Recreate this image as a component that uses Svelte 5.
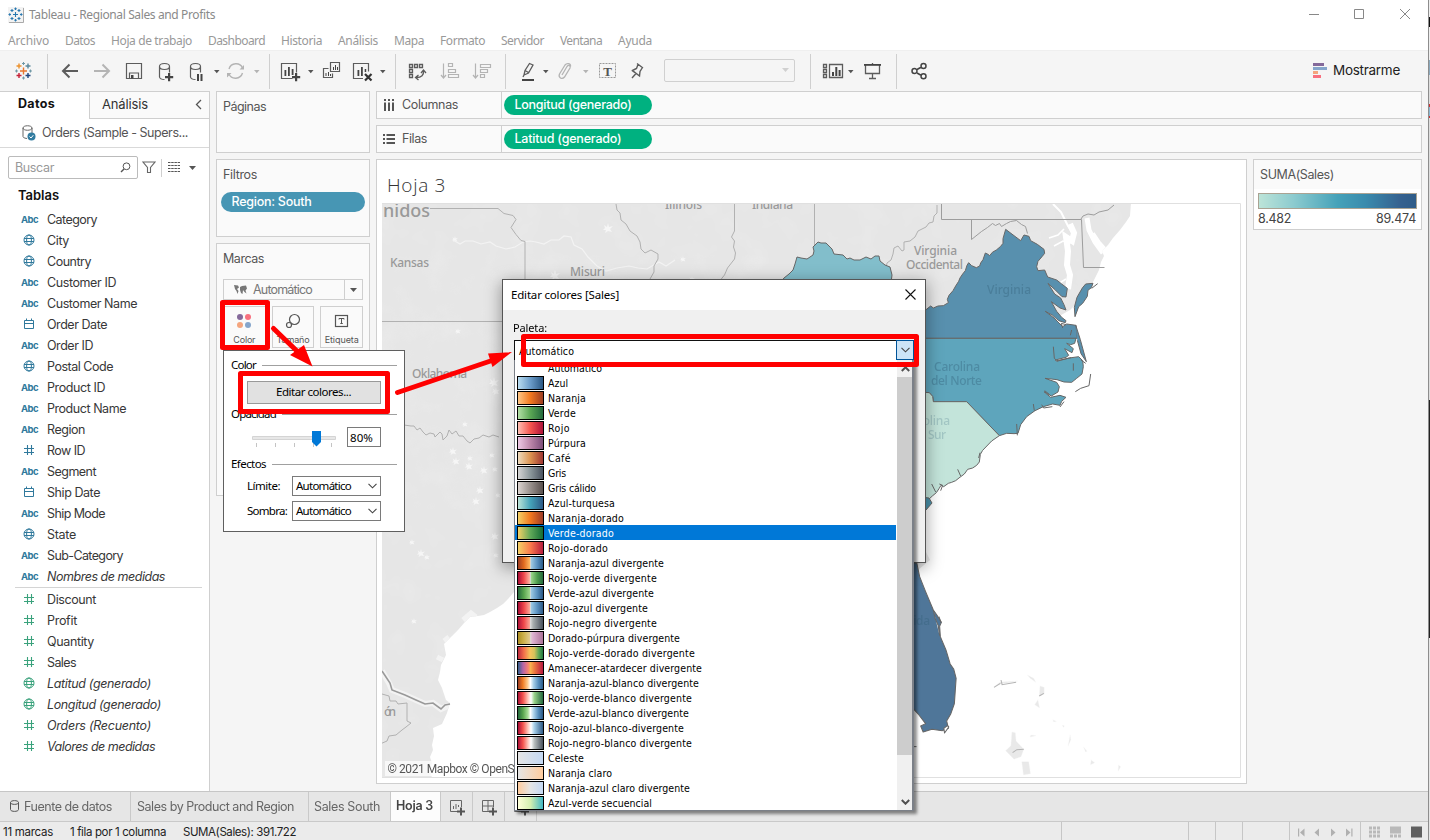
<script>
  // Tracks a label so that it takes up its design width.
  function fit(node, width) {
    if (!width) return;
    const natural = node.getBoundingClientRect().width;
    const count = Math.max(node.textContent.length, 1);
    node.style.letterSpacing = `${((width - natural) / count).toFixed(3)}px`;
  }

  const menus = [
    ['Archivo', 41], ['Datos', 30], ['Hoja de trabajo', 81], ['Dashboard', 57], ['Historia', 41],
    ['Análisis', 40], ['Mapa', 30], ['Formato', 45], ['Servidor', 43], ['Ventana', 42], ['Ayuda', 34]
  ];

  const db = (x) =>
    `M${x} 66.5v10.5q.5 2.5 5 2.5M${x + 10} 66.5v6M${x} 66.5c0-4 10-4 10 0s-10 4-10 0`;

  const tools = [
    { id: 'logo', x: 14, w: 19 }, { sep: 47 },
    { x: 61, w: 18, sw: 2, d: 'M78 71H63M69.5 64.5 63 71l6.5 6.5' },
    { x: 93, w: 18, sw: 2, c: '#b4b4b4', d: 'M94 71h15M102.500 64.500 109 71l-6.500 6.500' },
    { x: 125, w: 18, d: 'M126.500 63.500h15v15h-15zM129.500 78.500v-5.500h9v5.500', f: 'M131 75h2.500v3.500H131z' },
    { x: 158, w: 17, d: db(159.5), f: 'M168 73h2.200v3h3v2.200h-3v3H168v-3h-3V76h3z' },
    { x: 189, w: 15, d: db(190.5), f: 'M197 74h2v7h-2zM200.500 74h2v7h-2z' },
    { caret: 214 },
    { x: 226, w: 20, sw: 1.4, c: '#b4b4b4', d: 'M229 69c2-6.500 11-7 13.500-1M242.500 73c-2 6.500-11 7-13.500 1', f: 'M239.500 69.500h4.500v-4.500zM231.500 73h-4.500v4.500z' },
    { caret: 254, c: '#b4b4b4' }, { sep: 269 },
    { x: 280, w: 21, d: 'M292.500 78.500h-11v-15h15v9', f: 'M284.500 70h1.800v6h-1.800zM288 67h1.800v9H288zM291.700 69h1.800v6h-1.800zM295 73h2.200v3h3v2.200h-3v3H295v-3h-3V76h3z' },
    { caret: 308 },
    { x: 322, w: 20, d: 'M330.500 62.500h9v9h-9zM328.500 68.500h-5v9h9v-4', f: 'M333 67h1v3h-1zM335 65h1v5h-1zM337 67h1v3h-1zM325.500 73h1v3h-1zM328 72h1v4h-1zM330 74h1v2h-1z' },
    { x: 352, w: 22, d: 'M363 78.500h-9.500v-15h15v8', f: 'M357.500 70h1.800v6h-1.800zM361 67h1.800v9H361zM364.700 69h1.500v3h-1.500z', d2: 'M365 74l6.500 6.500M371.500 74l-6.500 6.500' },
    { caret: 380 }, { sep: 395 },
    { x: 408, w: 20, sw: 1.3, d: 'M409.500 64.500h3v3h-3zM414.500 64.500h3v3h-3zM419.500 64.500h3v3h-3zM409.500 69.500h3v3h-3zM409.500 74.500h3v3h-3zM423.500 71c.5 4-2 6.500-7 6.500M421 73l2.500-3 2.500 3M418.500 75l-3 2.500 3 2.500' },
    { x: 440, w: 20, sw: 1.2, c: '#b4b4b4', d: 'M443.500 63.500v14M441 75l2.500 3 2.500-3M448.500 63.500h4v3h-4zM448.500 69.500h7v3h-7zM448.500 74.500h10v3h-10z' },
    { x: 472, w: 20, sw: 1.2, c: '#b4b4b4', d: 'M475.500 63.500v14M473 75l2.500 3 2.500-3M480.500 64.500h10v3h-10zM480.500 69.500h7v3h-7zM480.500 74.500h4v3h-4z' },
    { sep: 505 },
    { x: 521, w: 15, sw: 1.3, d: 'M524 75l1-4.500 4.500-7 3.500 1.500-4.500 8zM525 70.500l3.500 2M524 75l-1 2', f: 'M522 79h12v2h-12z' },
    { caret: 543 },
    { x: 557, w: 16, sw: 1.3, c: '#b4b4b4', d: 'M562 75l5-8.500c1.500-2 4-1 3 1.500l-5.500 9c-2.500 3-6.500.5-5-3l5.500-9c2-2.500 6-1.500 5.500 1.500' },
    { caret: 583, c: '#b4b4b4' },
    { id: 'text', x: 598, w: 19 },
    { x: 630, w: 16, sw: 1.4, d: 'M637 63.500l6 4.500M638 64.500l-1.500 4-4 2 7 5.500.500-4.500 2.500-4M636 73.500l-4 4.500M632 70.500l7.500 5.500' },
    { select: 664 }, { sep: 810 },
    { x: 822, w: 22, sw: 1.3, d: 'M823.500 64.500h3v3h-3zM823.500 69.500h3v3h-3zM823.500 74.500h3v3h-3zM829.500 64.500h13v13h-13z', f: 'M832 72h2v4h-2zM835.300 67h2v9h-2zM838.600 70h2v6h-2z' },
    { caret: 848 },
    { x: 863, w: 19, sw: 1.3, d: 'M865.500 65v8.500h14V65M872.500 63v1M872.500 73.500v4.500M869 78.500h7', f: 'M864 64h17v1.800h-17z' },
    { sep: 896 },
    { x: 911, w: 17, sw: 1.5, c: '#444', d: 'M917 69.500l4.500-2.500M917 73l4.500 2.500M912 71a2.500 2.500 0 1 0 5 0a2.500 2.500 0 1 0-5 0M921 66a2.500 2.500 0 1 0 5 0a2.500 2.500 0 1 0-5 0M921 76.200a2.500 2.500 0 1 0 5 0a2.500 2.500 0 1 0-5 0' },
    { id: 'show', x: 1312, w: 17 }
  ];
  let end = 0;
  for (const t of tools) {
    t.left = t.x ?? t.sep ?? t.caret ?? t.select;
    t.size = t.w ?? (t.sep ? 1 : t.caret ? 6 : 131);
    t.gap = t.left - end;
    end = t.left + t.size;
  }

  const dims = [
    ['abc', 'Category', 50], ['globe', 'City', 22], ['globe', 'Country', 44], ['abc', 'Customer ID', 69],
    ['abc', 'Customer Name', 90], ['date', 'Order Date', 60], ['abc', 'Order ID', 46], ['globe', 'Postal Code', 66],
    ['abc', 'Product ID', 58], ['abc', 'Product Name', 79], ['abc', 'Region', 38], ['num', 'Row ID', 38],
    ['abc', 'Segment', 49], ['date', 'Ship Date', 53], ['abc', 'Ship Mode', 58], ['globe', 'State', 29],
    ['abc', 'Sub-Category', 76], ['abc', 'Nombres de medidas', 118, true]
  ];
  const measures = [
    ['num', 'Discount', 49], ['num', 'Profit', 30], ['num', 'Quantity', 47], ['num', 'Sales', 29],
    ['globe', 'Latitud (generado)', 104, true], ['globe', 'Longitud (generado)', 114, true],
    ['num', 'Orders (Recuento)', 104, true], ['num', 'Valores de medidas', 108, true]
  ];

  const blue = '#b9ddf1,#6a9bc8,#2a5783';
  const green = '#b3e0a6,#5aa654,#24693d';
  const palettes = [
    ['Automático', 54, ''], ['Azul', 20, blue], ['Naranja', 38, '#ffc685,#f2781f,#9e3d22'], ['Verde', 28, green],
    ['Rojo', 22, '#ffbeb2,#f5554e,#ae123a'], ['Púrpura', 38, '#eec9e5,#bc86a9,#7c4d79'],
    ['Café', 23, '#eedbbd,#dc9350,#9f3632'], ['Gris', 18, '#d5d5d5,#8b979b,#49525e'],
    ['Gris cálido', 48, '#dcd4d0,#98908c,#59504e'], ['Azul-turquesa', 67, '#bce4d8,#45a2b9,#2c5985'],
    ['Naranja-dorado', 76, '#f4d166,#f2781f,#9e3a26'], ['Verde-dorado', 66, '#f4d166,#60a858,#146c36'],
    ['Rojo-dorado', 60, '#f4d166,#fb7a4c,#b71d3e'],
    ['Naranja-azul divergente', 116, '#9e3d22,#e0691f,#ffb55f 46%,#d9d5c9 50%,#9cc8e2 54%,#5b92c0,#2b5c8a'],
    ['Rojo-verde divergente', 109, '#a90c38,#f0474a,#fdb1a0 46%,#d0d7cc 50%,#98d388 54%,#4f9d4f,#24693d'],
    ['Verde-azul divergente', 106, '#24693d,#59a54e,#9fd88d 47%,#cbd8d8 50%,#99c6e2 54%,#5b92c0,#2a5783'],
    ['Rojo-azul divergente', 100, '#a90c38,#f0474a,#fba798 47%,#d7d7d7 50%,#99c6e2 54%,#5b92c0,#2e5a87'],
    ['Rojo-negro divergente', 109, '#ae123a,#f0474a,#fba798 47%,#d9d9d9 50%,#a9b0b1 60%,#49525e'],
    ['Dorado-púrpura divergente', 132, '#ad9024,#cdb14c,#dfc98c 46%,#ddd5cf 50%,#ddb4d1 58%,#ac7299'],
    ['Rojo-verde-dorado divergente', 147, '#be2a3e,#f3704b,#f6c45c 48%,#d5c25b,#60a858,#22763f'],
    ['Amanecer-atardecer divergente', 154, '#33608c,#b464a8,#f58073 40%,#f7b24e 50%,#ed7c40 65%,#b81840'],
    ['Naranja-azul-blanco divergente', 151, '#9e3d22,#ef7b24,#ffca8c 38%,#fff 50%,#a8cfe8 62%,#5b92c0,#2b5c8a'],
    ['Rojo-verde-blanco divergente', 144, '#ae123a,#f5554e,#ffc6bb 40%,#fff 52%,#9bd38b 65%,#24693d'],
    ['Verde-azul-blanco divergente', 141, '#24693d,#59a54e,#aadf9a 40%,#fff 50%,#b2d6ed 62%,#5b92c0,#2a5783'],
    ['Rojo-azul-blanco-divergente', 136, '#a90c38,#f5554e,#ffc6bb 40%,#fff 52%,#a8cfe8 65%,#2e5a87'],
    ['Rojo-negro-blanco divergente', 144, '#ae123a,#f5554e,#ffc6bb 40%,#fff 52%,#bbc0c0 65%,#49525e'],
    ['Celeste', 36, '#e5e5e5,#c4d8f3'], ['Naranja claro', 64, '#e5e5e5,#ffcc9e'],
    ['Naranja-azul claro divergente', 142, '#ffcc9e,#e5e5e5,#c4d8f3'],
    ['Azul-verde secuencial', 104, '#feffd9,#d3efb0,#41b7c4']
  ];

  // Small reservoirs scattered over the plain, each one with a size.
  const lakes = [
    [455, 239, 3], [608, 228, 5], [683, 259, 3], [692, 279, 3], [555, 275, 5], [458, 331, 3], [494, 382, 5],
    [496, 391, 4], [465, 424, 3], [453, 451, 4], [456, 461, 4], [469, 466, 4], [470, 458, 3], [484, 470, 4],
    [495, 469, 3], [480, 490, 4], [476, 501, 4], [498, 495, 3], [492, 455, 3], [412, 542, 3], [421, 553, 4],
    [427, 557, 3], [495, 536, 4], [496, 555, 3], [414, 621, 3]
  ];
</script>

{#snippet label(text, width)}
  <span class="label" use:fit={width}>{text}</span>
{/snippet}

{#snippet glyph(kind)}
  <span class="glyph">
    {#if kind === 'abc'}
      <span class="abc" use:fit={17}>Abc</span>
    {:else if kind === 'globe'}
      <svg width="12" height="12" viewBox="0 0 12 12"><g fill="none" stroke="currentColor"><circle cx="6" cy="6" r="5" /><ellipse cx="6" cy="6" rx="2.400" ry="5" /><path d="M1 4.500h10M1 7.500h10" /></g></svg>
    {:else if kind === 'date'}
      <svg width="12" height="12" viewBox="0 0 12 12"><path d="M1.500 2.500h9v8h-9zM1.500 5.500h9M3.500.5v2.500M8.500.5v2.500" fill="none" stroke="currentColor" /></svg>
    {:else}
      <svg width="12" height="12" viewBox="0 0 12 12"><path d="M4.500 1v10M8.500 1v10M1 4.500h10M1 8.500h10" fill="none" stroke="currentColor" stroke-width="1.100" /></svg>
    {/if}
  </span>
{/snippet}

{#snippet chevron()}
  <svg class="chev" width="9" height="6" viewBox="0 0 9 6"><path d="M.5.8 4.500 4.800 8.500.8" fill="none" stroke="#444" stroke-width="1.100" /></svg>
{/snippet}

<div class="window">
  <header class="title">
    <svg width="16" height="16" viewBox="0 0 16 16">
      <path d="M1 15.500h14.500V1" fill="none" stroke="#aaa" />
      <path d="M7.500 5v5M5 7.500h5M4 2v3M2.500 3.500h3M11 2v3M9.500 3.500h3M4 10v3M2.500 11.500h3M11 10v3M9.500 11.500h3M7.500 .5v2.500M6.300 1.700h2.500M7.500 12v2.500M6.300 13.300h2.500M1.700 6.300v2.500M.5 7.500H3M13.300 6.300v2.500M12 7.500h2.500" fill="none" stroke="#2878b0" stroke-width="1.100" />
    </svg>
    <div class="name">{@render label('Tableau - Regional Sales and Profits', 186)}</div>
    <svg class="controls" width="104" height="14" viewBox="0 0 104 14"><path d="M1 6.500h10M46.500 1.500h9v9h-9zM92 1l10 10M102 1 92 11" fill="none" stroke="#888" /></svg>
  </header>

  <nav class="menu">
    {#each menus as [text, width]}{@render label(text, width)}{/each}
  </nav>

  <div class="toolbar">
    {#each tools as t}
      {#if t.sep}
        <i class="sep" style:margin-left="{t.gap}px"></i>
      {:else if t.caret}
        <svg style:margin-left="{t.gap}px" width="6" height="26" viewBox="0 0 6 26"><path d="M0 12h5.500L2.800 15.200z" fill={t.c ?? '#555'} /></svg>
      {:else if t.select}
        <div class="fitbox" style:margin-left="{t.gap}px"><svg width="8" height="5" viewBox="0 0 8 5"><path d="M0 0h7L3.500 4z" fill="#d0d0d0" /></svg></div>
      {:else}
        <svg style:margin-left="{t.gap}px" width={t.w} height="26" viewBox="{t.x} 58 {t.w} 26">
          {#if t.id === 'logo'}
            <g fill="none" stroke-width="1.400">
              <path d="M23.500 67.500v7M20 71h7" stroke="#e8762d" />
              <path d="M19 63.500v5M16.500 66h5" stroke="#eb912c" /><path d="M28 63.500v5M25.500 66h5" stroke="#59879b" />
              <path d="M19 73v5M16.500 75.500h5" stroke="#c72037" /><path d="M28 73v5M25.500 75.500h5" stroke="#1f457e" />
              <path d="M23.500 62v3M22 63.500h3M23.500 76.500v3M22 78h3M16.500 69.500v3M15 71h3M30.500 69.500v3M29 71h3" stroke="#7199a6" stroke-width="1" />
            </g>
          {:else if t.id === 'text'}
            <rect x="599.500" y="63.500" width="16" height="14" fill="none" stroke="#999" stroke-dasharray="2 1" />
            <text x="607.500" y="75.500" text-anchor="middle" font-family="Liberation Serif, serif" font-size="13" font-weight="bold" fill="#555">T</text>
          {:else if t.id === 'show'}
            <path d="M1313 63h11v3h-11z" fill="#84699a" /><path d="M1313 67h14v3h-14z" fill="#85a5cb" /><path d="M1313 71h5v3h-5z" fill="#f4a57e" /><path d="M1313 75h8v3h-8z" fill="#f8707f" />
          {:else}
            <path d={t.d} fill="none" stroke={t.c ?? '#5c5c5c'} stroke-width={t.sw ?? 1.2} />
            {#if t.f}<path d={t.f} fill={t.c ?? '#444'} />{/if}
            {#if t.d2}<path d={t.d2} fill="none" stroke="#333" stroke-width="2.200" />{/if}
          {/if}
        </svg>
      {/if}
    {/each}
    <div class="showme">{@render label('Mostrarme', 67)}</div>
  </div>

  <main class="body">
    <aside class="data">
      <div class="tabs">
        <div class="on">{@render label('Datos', 37)}</div>
        <div class="off">{@render label('Análisis', 46)}
          <svg width="7" height="11" viewBox="0 0 7 11"><path d="M6 1 1.500 5.500 6 10" fill="none" stroke="#555" stroke-width="1.300" /></svg>
        </div>
      </div>
      <div class="source">
        <svg width="14" height="16" viewBox="0 0 14 16"><path d="M1 3v8.500Q1.500 13.500 5 13.500M10 3v5M1 3c0-3 9-3 9 0s-9 3-9 0" fill="none" stroke="#666" /><circle cx="9.500" cy="11.500" r="4" fill="#327ca0" /><path d="M7.500 11.500 9 13l2.300-2.800" fill="none" stroke="#fff" /></svg>
        {@render label('Orders (Sample - Supers...', 146)}
      </div>
      <div class="search">
        <div class="box">{@render label('Buscar', 39)}
          <svg width="11" height="11" viewBox="0 0 11 11"><circle cx="6.500" cy="4.300" r="3.400" fill="none" stroke="#555" /><path d="M4 7 1 10" stroke="#555" stroke-width="1.400" /></svg>
        </div>
        <svg width="14" height="13" viewBox="0 0 14 13"><path d="M1 1h12L8.500 6.500v5h-3v-5z" fill="none" stroke="#666" stroke-width="1.100" /></svg>
        <i></i>
        <svg width="12" height="11" viewBox="0 0 12 11"><path d="M0 .5h12M0 3.500h12M0 6.500h12M0 9.500h12" stroke="#555" stroke-width="1.200" stroke-dasharray="2.500 .7" /></svg>
        <svg class="drop" width="7" height="4" viewBox="0 0 7 4"><path d="M0 0h7L3.500 4z" fill="#555" /></svg>
      </div>
      <h2>{@render label('Tablas', 41)}</h2>
      <ul class="dims">
        {#each dims as [kind, name, width, it]}<li class:it>{@render glyph(kind)}{@render label(name, width)}</li>{/each}
      </ul>
      <ul class="measures">
        {#each measures as [kind, name, width, it]}<li class:it>{@render glyph(kind)}{@render label(name, width)}</li>{/each}
      </ul>
    </aside>

    <section class="cards">
      <div class="card pages">{@render label('Páginas', 43)}</div>
      <div class="card filters">{@render label('Filtros', 34)}<div class="pill region">{@render label('Region: South', 80)}</div></div>
      <div class="card marks">
        {@render label('Marcas', 41)}
        <div class="marktype">
          <svg width="13" height="10" viewBox="0 0 13 10"><path d="M0 0l4 .5 1 2-2 1.500 1.500 2L3.500 9l-1-3L1 4zM6 2l2-1 4-.5 1 3-1.500 2 1 3-2-1.500L9 5 8.500 9 7 8 6 5z" fill="#777" /></svg>
          {@render label('Automático', 59)}
          <b><svg width="7" height="4" viewBox="0 0 7 4"><path d="M0 0h7L3.500 4z" fill="#555" /></svg></b>
        </div>
        <div class="buttons">
          <div><svg width="16" height="16" viewBox="0 0 16 16"><circle cx="4" cy="4" r="3" fill="#84699a" /><circle cx="12" cy="4" r="3" fill="#f8707f" /><circle cx="4" cy="12" r="3" fill="#f4a57e" /><circle cx="12" cy="12" r="3" fill="#85a5cb" /></svg>{@render label('Color', 22)}</div>
          <div><svg width="16" height="16" viewBox="0 0 16 16"><circle cx="9.500" cy="6.500" r="5" fill="none" stroke="#555" stroke-width="1.200" /><circle cx="4" cy="12" r="2.500" fill="#fafafa" stroke="#555" stroke-width="1.200" /></svg>{@render label('Tamaño', 33)}</div>
          <div><svg width="16" height="16" viewBox="0 0 16 16"><rect x="1.500" y="2.500" width="12" height="11" fill="none" stroke="#555" stroke-width="1.200" /><path d="M5 6.500v-1h5v1M7.500 5.500v5M6.300 10.500h2.500" fill="none" stroke="#555" /></svg>{@render label('Etiqueta', 34)}</div>
        </div>
      </div>
    </section>

    <section class="work">
      <div class="shelf">
        <div class="key"><svg width="12" height="12" viewBox="0 0 12 12"><path d="M2 0v2M6 0v2M10 0v2M2 3.500V12M6 3.500V12M10 3.500V12" stroke="#555" stroke-width="2" /></svg>{@render label('Columnas', 56)}</div>
        <div class="pill geo">{@render label('Longitud (generado)', 117)}</div>
      </div>
      <div class="shelf">
        <div class="key"><svg width="12" height="12" viewBox="0 0 12 12"><path d="M0 2h2M0 6h2M0 10h2M3.500 2H12M3.500 6H12M3.500 10H12" stroke="#555" stroke-width="1.800" /></svg>{@render label('Filas', 25)}</div>
        <div class="pill geo">{@render label('Latitud (generado)', 107)}</div>
      </div>
      <div class="canvas">
        <div class="sheet">
          <h1>{@render label('Hoja 3', 59)}</h1>
          <svg class="map" width="859" height="575" viewBox="382 203 859 575">
            <defs>
              <filter id="relief" x="0" y="0" width="100%" height="100%"><feTurbulence type="fractalNoise" baseFrequency=".035" numOctaves="3" seed="6" /><feColorMatrix values="0 0 0 0 1  0 0 0 0 1  0 0 0 0 1  0 0 0 1.600 -.7" /></filter>
              <clipPath id="land"><path d="M382 203H1131L1130 216 1126 222 1120 230 1113 238 1108 245 1102 251 1104 256 1101 262 1099 270 1092 284 1084 296 1070 310 1000 350 900 500 930 560 918 570H515L514 592 508 599 503 604 497 608 490 612 484 615 478 616 470 617 465 622 458 630 452 636 444 644 446 655 441 665 440 672 438 680 442 688 444 694 446 700 450 703 447 713 442 724 433 728 434 736 432 745 433 750 430 757 432 763 430 770 432 778H382z" /></clipPath>
            </defs>
            <g clip-path="url(#land)">
              <rect x="382" y="203" width="749" height="575" fill="#e6e6e6" />
              <rect x="382" y="203" width="749" height="575" filter="url(#relief)" opacity=".18" />
              {#each lakes as [x, y, s]}
                <path transform="translate({x} {y}) scale({s / 5})" d="M-4-3l3 2 1-4 1 4 4-1-3 3 2 3-4-1-3 2 1-3-3 0 2-2z" fill="#f6f6f6" />
              {/each}
              <g fill="none" stroke="#f3f3f3" stroke-width="1.200">
                <path d="M453 240l7 4 5-3 8 0 8 3 9-2 6 4 10 3 9-2 8-5 7-1 6 1 8 2 7-4 8 0 5-4 7 1 3 8 8 4 6 8 9 9 9 5 11-3 12-2 9 2 9 1 12-7 7 4 9-6" />
                <path d="M1053 204l8 8 3 6 4 8 5 8" stroke="#fff" stroke-width="2" />
                <path d="M1070 224l4 9-2 8-6-4 2 14-1 14 3 10-2 14" stroke="#fff" stroke-width="6" />
                <path d="M1087 218l2 12 6 12 8 11" stroke="#fff" stroke-width="5" />
                <path d="M1092 234l6 9 8 9" stroke="#fff" stroke-width="6" />
                <path d="M1054 246l9-5 8 2M1058 284l8-5M1049 238l9-3 6-6" stroke="#fff" stroke-width="1.600" />
                <path d="M450 705l-9 4-8-6-8 1-9-4-11-5-13-5-3-7-7-12" stroke-width="6" />
                <path d="M463 620l8-7 5 4M449 637l-5 4M437 657l6 3" stroke-width="5" />
              </g>
            </g>
            <g fill="none" stroke="#b1b1b1" stroke-width="1">
              <path d="M430 208.500h68l6 5 9 2 3 4-5 8 5 7 5 6 4 1V320M382 321.500h122" />
              <path d="M616 204l1 6 3 3 1 7 5 4 4 7 7 5 3 6 1 7 4 4 6-3 7 4 0 5-4 7 0 6-4 7 2 6M734.500 204v27l-3 6 3 4-1 6 2 6-1 6-7 9-3 7-4 5 2 4M814.500 204v41M881 268l5 0 1-5 4-3 2-6 1-6 4-2 4 5 2-1 0-8 6-1 5-4 3-6 8-4 3-4 4-1 1-6 3-3 0-8" />
              <path d="M941.500 204v15.500h140l2 48h21M971.500 219.500v20l10-8 6-4 5-4 3 2 4-2 2 3 5-3 4-2 6-1 5 4 4 2 2 7M1081 219l2-3 5-2 6 1 5-3 9-2 6-5" stroke="#9d9d9d" />
              <path d="M404 425l7 1 3 0 3 4 3-2 3 4 3 3 4-2 4 1 1 3 5-5 2 2 1 6 4-4 2-6 3 4 4-3 3 5 4 0 4 5 3 2 4-4 5-1 4-3 6 2 4-2 6 2" />
              <path d="M382 671l8 12 2 7 13 5 11 5 9 4 8-1 8 6 4-4 5-1" stroke="#999" stroke-width="1.600" />
              <path d="M382 694l7 2 1 5 6 0 2 3 9-1 0 18 4 2-5 4-4 3-6 5-7 1-2 5-7 3" />
            </g>
            <g stroke="#666" stroke-width="1" stroke-linejoin="round">
              <path d="M779 284l5-6 5-4 4-4 2-6 2-7 4 1 6 1 6-4 1-4-1-4 3-3 2-2 3 1 5 0 6 6 2 5 9 1 4 4 3-1 4 2 6 0 6-3 5 2 4-3 4 0 1 5 5 4 5 2 2 8-1 8-3 5z" fill="#82becb" />
              <g transform="translate(880 200) scale(.33333)" stroke-width="3">
                <path d="M110 415V345l27-15 15-12 8 6 14-6 16-1 15-9-3-10 5-12 12-14 8-14 9-14 4-10 8-12 8-10 5-16 5-8 9 9 14 6 10-5 3-9 7-10 7-20 8 4 5 4 8-10 12-7 12-10 8-10 0-14L377 88 422 122 432 105 447 109 452 122 472 133 492 148 494 160 486 170 474 184 470 200 474 212 494 210 503 231 530 240 545 252 562 265 558 291 546 290 526 270 504 250 524 282 542 294 552 314 558 330 540 324 514 305 530 334 545 352 558 362 556 368 536 362 518 346 496 334 522 354 534 366 548 380 560 372 588 376 592 415z" fill="#5890ae" />
                <path d="M110 415H588L584 430 572 434 560 430 580 446 576 458 554 446 566 466 558 472 526 480 530 484 568 474 596 470 608 482 610 500 606 522 590 535 575 547 552 546 531 539 495 535 530 547 538 560 534 576 514 588 492 575 512 592 540 586 558 592 545 604 540 616 518 612 490 620 465 632 440 650 422 674 414 700 402 701 380 700 358 707 260 606H160l-2-16-10-11-38-3z" fill="#5ea5bc" />
                <path d="M110 575l38 3 10 11 2 16H260l98 102-23 16-27 28-7 12-3 23-8 10-12 8-15 4-10 14-16 12-10 8-12 5-10 3-14 10-8-4-6 10-8 12-12 10-16 15-40 10z" fill="#c3e4da" />
                <path d="M585 350l-2-28 8-30 16-28 10-12 22-2-5 13-10 8-2 18-14 21-12 10zM635 265l18-14M587 375l14 44 18 66-16-24-11-40" fill="#5890ae" />
                <path d="M632 522l-5 35-25 8-16 10M520 440l3 35 8 7 42-9M552 605l-12 16M412 706l-2-34" fill="none" />
                <path d="M548 384l-4-14 14 4M575 390l-4 16M494 572l15 12M485 614l6 10 26-4M460 612l3 20M580 512l0-22M155 852l12 24M178 852l10 4-6 16M233 808l9 20M300 758l-4 16M603 480l14 10" fill="none" />
              </g>
              <path d="M921 497l8 1 3 5-6 7-5 2z" fill="#4a92ab" />
              <g transform="translate(880 480) scale(.3508 .3333)" stroke-width="3">
                <path d="M80 247l25 3 8 40 17 45 22 55 10 15 13 22-5 12 2 31 16 40 12 42 10 15 7 28-5 76-10 30-12 22 5 22-17 7-30-4-25 8-7-18 14-7-19-26-16-19-20-20z" fill="#4f7699" />
                <path d="M152 390l5 25 9 22 4 30M168 410l6 18M182 745l10-8 4 4-12 18z" fill="#fff" />
                <path d="M97 800l7 0" />
              </g>
            </g>
            <g transform="translate(880 480) scale(.3508 .3333)" fill="#e9e9e9" stroke="#f6f6f6">
              <path d="M325 620l18-14 50-3-48 9zM420 585l18 10 6 12-16-12zM456 618l12 4 0 20-14 6zM450 660l5 24-14-10zM376 756l10 2 2 25 22 25-8 22-20 8-24-26 15-15zM404 845l20 0 5 36-20 4zM430 765l15 2-17 4zM542 765l2 14-8 20zM580 800l10 14-4 2zM602 840l10 8-12 6zM680 855l6 5-7 14zM493 720l10 4-8 2zM520 735l6 3-4 4z" />
              <path d="M325 622l18-12M345 600l3 14 40-7M454 648l13-8M378 818l12-9 20-1" fill="none" stroke="#b4b4b4" stroke-width="3" />
            </g>
            <g class="places" fill="#999">
              <text x="383" y="217" font-size="18" textLength="47">nidos</text>
              <text x="390" y="267" textLength="39">Kansas</text>
              <text x="570" y="276" textLength="35">Misuri</text>
              <text x="412" y="378" textLength="55">Oklahoma</text>
              <text x="665" y="209" textLength="37">Illinois</text>
              <text x="752" y="209" textLength="41">Indiana</text>
              <text x="914" y="255" textLength="43">Virginia</text>
              <text x="906" y="269" textLength="57">Occidental</text>
              <text x="384" y="716" textLength="12">ón</text>
              <g fill="#34617a" opacity=".38">
                <text x="987" y="294" textLength="44">Virginia</text>
                <text x="934" y="371" textLength="46">Carolina</text>
                <text x="931" y="385" textLength="51">del Norte</text>
                <text x="904" y="425" textLength="46" opacity=".6">Carolina</text>
                <text x="928" y="439" textLength="18" opacity=".6">Sur</text>
                <text x="893" y="625" textLength="37">Florida</text>
              </g>
            </g>
            <rect x="385" y="761" width="134" height="15" fill="#fff" opacity=".7" />
            <text class="credit" x="387.500" y="773" textLength="172">© 2021 Mapbox © OpenStreetMap</text>
            <path d="M382 203.500H1240.500V777.500H382" fill="none" stroke="#e0e0e0" />
          </svg>
        </div>
        <div class="legend">
          <div class="head">{@render label('SUMA(Sales)', 74)}</div>
          <div class="ramp"></div>
          <div class="ends">{@render label('8.482', 33)}{@render label('89.474', 40)}</div>
        </div>
      </div>
    </section>
  </main>

  <footer class="sheets">
    <div class="src"><svg width="9" height="12" viewBox="0 0 9 12"><path d="M.5 2.500v7c0 2.500 8 2.500 8 0v-7c0-2.500-8-2.500-8 0s8 2.500 8 0" fill="none" stroke="#555" /></svg>{@render label('Fuente de datos', 88)}</div>
    <div class="long">{@render label('Sales by Product and Region', 157)}</div>
    <div class="south">{@render label('Sales South', 66)}</div>
    <div class="active">{@render label('Hoja 3', 37)}</div>
    <div class="new"><svg width="16" height="16" viewBox="0 0 16 16"><path d="M8 11.500H.5V.5h11V7M3.500 6v3M6 4v5M8.500 5v2" fill="none" stroke="#666" /><path d="M11 7.500v8M7 11.500h8" stroke="#555" stroke-width="2" /></svg></div>
    <div class="new"><svg width="16" height="16" viewBox="0 0 16 16"><path d="M8 11.500H.5V.5h11V7M6 .5v11M.5 6h11" fill="none" stroke="#666" /><path d="M11 7.500v8M7 11.500h8" stroke="#555" stroke-width="2" /></svg></div>
    <div class="new"><svg width="16" height="16" viewBox="0 0 16 16"><path d="M8 11.500H.5V2.500h11V7" fill="none" stroke="#666" /><path d="M11 7.500v8M7 11.500h8" stroke="#555" stroke-width="2" /></svg></div>
  </footer>

  <footer class="status">
    {@render label('11 marcas', 50)}{@render label('1 fila por 1 columna', 96)}{@render label('SUMA(Sales): 391.722', 113)}
    <div class="cells">
      <i class="c1"></i><i class="c2"></i><i class="c2"></i><i class="c3"></i>
      <div class="step"><svg width="55" height="9" viewBox="0 0 55 9" fill="#b0b0b0"><path d="M0 .5h1.200v8H0zM6.500.5v8L2 4.500zM21 .5v8L16.500 4.500zM33 .5v8l4.500-4zM48 .5v8l4.500-4zM53.300.5h1.200v8h-1.200z" /></svg></div>
      <div class="views"><svg width="54" height="12" viewBox="0 0 54 12"><path d="M0 .5h3v3H0zM4 .5h3v3H4zM8 .5h3v3H8zM0 4.500h3v3H0zM4 4.500h3v3H4zM8 4.500h3v3H8zM0 8.500h3v3H0zM4 8.500h3v3H4zM8 8.500h3v3H8zM21 .5h11v7H21zM21 8.500h3v3h-3zM25 8.500h3v3h-3zM29 8.500h3v3h-3z" fill="#b9b9b9" /><path d="M42 .5h11v11h-11z" fill="#606060" /></svg></div>
    </div>
  </footer>

  <div class="popup">
    <div class="rule">{@render label('Color', 25)}<i></i></div>
    <div class="edit">{@render label('Editar colores...', 75)}</div>
    <div class="rule second">{@render label('Opacidad', 45)}<i></i></div>
    <div class="opacity">
      <svg width="84" height="20" viewBox="252 429 84 20"><path d="M252.500 436.500h83v3h-83z" fill="#e7e7e7" stroke="#d4d4d4" /><path d="M256.500 443v4M275.500 443v4M294.500 443v4M313.500 443v4M331.500 443v4" stroke="#c4c4c4" /><path d="M312 431h9v11l-4.500 4.500L312 442z" fill="#0078d7" /></svg>
      <div>{@render label('80%', 23)}</div>
    </div>
    <div class="rule third">{@render label('Efectos', 35)}<i></i></div>
    <div class="choice">{@render label('Límite:', 33)}<div>{@render label('Automático', 55)}{@render chevron()}</div></div>
    <div class="choice">{@render label('Sombra:', 40)}<div>{@render label('Automático', 55)}{@render chevron()}</div></div>
  </div>

  <div class="dialog">
    <div class="bar">{@render label('Editar colores [Sales]', 108)}
      <svg width="11" height="11" viewBox="0 0 11 11"><path d="M.5.5l10 10M10.500.5l-10 10" stroke="#111" stroke-width="1.100" /></svg>
    </div>
    <div class="field">{@render label('Paleta:', 34)}</div>
  </div>

  <div class="picker">
    <div class="value">{@render label('Automático', 55)}<b>{@render chevron()}</b></div>
    <div class="list">
      <ul>
        {#each palettes as [name, width, stops]}
          <li class:sel={name === 'Verde-dorado'}>
            <i class:none={!stops} style:background-image={stops ? `linear-gradient(90deg,${stops})` : 'none'}></i>{@render label(name, width)}
          </li>
        {/each}
      </ul>
      <div class="scroll">
        <svg width="9" height="6" viewBox="0 0 9 6"><path d="M.8 5 4.500 1.300 8.200 5" fill="none" stroke="#505050" stroke-width="2" /></svg>
        <i></i>
        <svg width="9" height="6" viewBox="0 0 9 6"><path d="M.8 1 4.500 4.700 8.200 1" fill="none" stroke="#505050" stroke-width="2" /></svg>
      </div>
    </div>
  </div>

  <svg class="marksup" width="1430" height="840" viewBox="0 0 1430 840">
    <g fill="none" stroke="#f00" stroke-width="5" stroke-linejoin="round">
      <rect x="222.500" y="302.500" width="45" height="45" /><rect x="240.500" y="373.500" width="147" height="38" /><rect x="523.500" y="336.500" width="393" height="28" />
      <path d="M273.500 328.500 300 354M397.500 392.500 492 360.500" stroke-linecap="round" />
    </g>
    <path d="M312.500 366.500 304 345l-14 10zM512 352l-24 1.500 4.500 13.500z" fill="#f00" />
  </svg>
  <div class="edge"></div>
</div>

<style>
  :global(body) { margin: 0; background: #fff; overflow: hidden; }
  .window, .window :global(*) { box-sizing: border-box; }
  .window { position: relative; width: 1430px; height: 840px; overflow: hidden; background: #f5f5f5; color: #333; font: 12.5px/16px Inter, "Open Sans", sans-serif; }
  .label, .abc { display: inline-block; white-space: nowrap; flex: none; }
  svg { display: block; flex: none; }
  ul { list-style: none; margin: 0; padding: 0; }
  h1, h2 { margin: 0; font-weight: 400; }

  .title { height: 31px; background: #fff; display: flex; align-items: center; padding: 0 20px 2px 8px; color: #8a8a8a; font: 12px/16px "Noto Sans", sans-serif; }
  .title svg:first-child { margin-right: 5px; background: #f3f3f3; }
  .name { flex: 1; }
  .controls { margin-right: -2px; }
  .menu { height: 19px; background: #fff; display: flex; gap: 16px; padding: 2px 8px 0; color: #999; font: 12px/16px "Noto Sans", sans-serif; }
  .toolbar { height: 41px; display: flex; align-items: flex-start; padding-top: 7px; border-top: 1px solid #efefef; }
  .sep { width: 1px; height: 35px; margin-top: -4px; background: #cfcfcf; }
  .fitbox { width: 131px; height: 23px; margin-top: 1px; border: 1px solid #d0d0d0; border-radius: 2px; display: flex; align-items: center; justify-content: flex-end; padding-right: 4px; }
  .showme { margin: 4px 0 0 4px; font-size: 13.500px; color: #222; }

  .body { height: 700px; display: grid; grid-template-columns: 210px 154px 1046px; column-gap: 6px; }
  .data { background: #fff; border-right: 1px solid #cfcfcf; border-top: 1px solid #cfcfcf; }
  .tabs { display: flex; height: 27px; font-size: 13px; }
  .on { width: 89px; padding: 4px 0 0 18px; font-weight: 700; color: #111; font-size: 12.500px; }
  .off { flex: 1; background: #fafafa; border-left: 1px solid #cfcfcf; border-bottom: 1px solid #cfcfcf; padding: 0 7px 2px 12px; display: flex; align-items: center; justify-content: space-between; }
  .source { height: 29px; border-bottom: 1px solid #d9d9d9; display: flex; align-items: center; gap: 6px; padding: 0 0 1px 22px; color: #555; }
  .search { display: flex; align-items: center; height: 23px; margin: 8px 0 0 8px; }
  .box { width: 130px; height: 23px; border: 1px solid #bbb; border-radius: 2px; display: flex; align-items: center; justify-content: space-between; padding: 0 6px; color: #999; margin-right: 4px; }
  .search > i { width: 1px; height: 18px; background: #cfcfcf; margin: 0 6px 0 5px; }
  .drop { margin-left: 9px; }
  h2 { height: 30px; padding: 8px 0 0 18px; font-size: 13px; line-height: 16px; font-weight: 600; color: #111; }
  li { display: flex; align-items: center; }
  .data li { height: 21px; padding-left: 21px; color: #383838; }
  .glyph { width: 26px; display: flex; color: #30799c; padding-left: 2px; }
  .glyph svg { margin-top: -1px; }
  .abc { font: 700 9.500px/12px Inter, sans-serif; margin: 1px 0 0 -2px; }
  .measures { margin: 0 7px 0 15px; border-top: 1px solid #d4d4d4; padding-top: 1px; }
  .measures li { padding-left: 6px; }
  .measures .glyph { color: #3aa27c; }
  .it { font-style: italic; }

  .cards { display: flex; flex-direction: column; gap: 6px; color: #555; }
  .card { background: #fafafa; border: 1px solid #cfcfcf; padding: 7px 6px 0; }
  .pages { height: 62px; }
  .filters { height: 78px; }
  .filters .region { margin: 9px -2px 0; background: #4796b4; padding-left: 10.500px; }
  .marks { height: 253px; }
  .pill { height: 20px; border-radius: 10px; color: #fff; display: flex; align-items: center; padding-left: 10.500px; font-weight: 500; }
  .marktype { height: 21px; margin-top: 12px; width: 140px; border: 1px solid #cfcfcf; display: flex; align-items: center; padding-left: 10px; gap: 6px; color: #777; }
  .marktype b { width: 18px; height: 19px; margin-left: auto; border-left: 1px solid #cfcfcf; display: grid; place-items: center; }
  .buttons { display: flex; gap: 6px; margin-top: 6px; width: 140px; }
  .buttons div { flex: 1; height: 42px; border: 1px solid #cfcfcf; display: flex; flex-direction: column; align-items: center; padding-top: 6px; font-size: 9px; line-height: 12px; gap: 5px; }

  .work { display: flex; flex-direction: column; gap: 6px; }
  .shelf { height: 28px; border: 1px solid #cfcfcf; background: #fafafa; display: flex; align-items: center; }
  .key { width: 125px; height: 26px; border-right: 1px solid #cfcfcf; display: flex; align-items: center; gap: 7px; padding-left: 6px; color: #555; }
  .geo { width: 148px; margin-left: 2px; background: #00b180; }
  .canvas { display: flex; gap: 6px; align-items: flex-start; }
  .sheet { width: 871px; height: 625px; background: #fff; border: 1px solid #cfcfcf; padding-left: 5px; }
  h1 { height: 43px; padding: 12px 0 0 5px; font: 300 19px/26px "Open Sans", sans-serif; color: #333; }
  .places { font: 500 12px "Noto Sans", sans-serif; }
  .credit { font: 12px Roboto, sans-serif; fill: #555; }
  .legend { width: 169px; height: 71px; border: 1px solid #cfcfcf; background: #fff; }
  .head { height: 29px; background: #fafafa; padding: 7px 6px; color: #555; }
  .ramp { margin: 4px 4px 0; height: 16px; border: 1px solid #aaa393; background: linear-gradient(90deg, #bce4d8, #8ccbcf 22%, #45a2b9 50%, #3a8bad 68%, #35618f 90%, #2f5c88); }
  .ends { display: flex; justify-content: space-between; padding: 2px 5px 0 4px; color: #444; }

  .sheets { height: 30px; background: #e6e6e6; border-top: 1px solid #c6c6c6; display: flex; color: #666; }
  .sheets > div { border-right: 1px solid #c9c9c9; display: flex; align-items: center; padding-left: 6px; }
  .sheets .src { width: 131px; padding-left: 10px; gap: 5px; }
  .sheets .src svg { margin-top: -2px; }
  .long { width: 178px; }
  .sheets .south { width: 82px; padding-left: 5px; }
  .sheets .active { width: 50px; background: #fcfcfc; color: #444; font-weight: 600; padding: 0 0 1px 5px; }
  .sheets .new { width: 32px; padding: 2px 0 0 9px; }
  .status { height: 19px; background: #ebebeb; border-top: 1px solid #c9c9c9; display: flex; align-items: center; gap: 17px; padding: 2px 1px 0 3px; color: #222; font-size: 11.500px; }
  .cells { margin: -2px 0 0 auto; height: 18px; display: flex; }
  .cells > * { border-left: 1px solid #c6c6c6; }
  .c1 { width: 127px; } .c2 { width: 27px; } .c3 { width: 47px; }
  .step { width: 71px; padding: 6px 0 0 8px; }
  .views { width: 69px; padding: 4px 0 0 8px; }

  .popup { position: absolute; left: 223px; top: 350px; width: 182px; height: 182px; background: #fff; border: 1px solid #5f5f5f; padding: 7px 7px 0; color: #000; font: 11.500px/14px "Noto Sans", sans-serif; }
  .rule { display: flex; align-items: center; gap: 6px; height: 15px; }
  .rule .label { margin-top: -2px; }
  .rule i { flex: 1; height: 1px; background: #a0a0a0; }
  .edit { width: 134px; height: 23px; margin: 8px 0 0 16px; background: #e1e1e1; border: 1px solid #999; display: grid; place-items: center; padding: 0 1px 2px 0; }
  .second { margin-top: 3px; }
  .opacity { display: flex; margin: 5px 0 0 21px; gap: 11px; height: 22px; }
  .opacity svg { margin-top: 2px; }
  .opacity div { width: 34px; height: 20px; border: 1px solid #7a7a7a; padding: 3px 2px; line-height: 13px; }
  .third { margin-top: 8px; margin-bottom: 4px; }
  .choice { display: flex; align-items: center; justify-content: space-between; padding: 0 16px 0 16px; height: 20px; margin-bottom: 5px; }
  .choice div { width: 89px; height: 20px; border: 1px solid #7a7a7a; display: flex; align-items: center; justify-content: space-between; padding: 0 3px; }

  .dialog { position: absolute; left: 502px; top: 279px; width: 424px; height: 284px; background: #f0f0f0; border: 1px solid #555; box-shadow: 0 4px 15px 1px rgba(0, 0, 0, .35); color: #000; font: 11.500px/14px "Noto Sans", sans-serif; }
  .bar { height: 30px; background: #fff; display: flex; align-items: center; justify-content: space-between; padding: 0 9px 1px 8px; }
  .field { padding: 11px 0 0 10px; font-size: 11px; }
  .picker { position: absolute; left: 514px; top: 340px; width: 400px; height: 471px; font: 10.500px/13px "DejaVu Sans Condensed", sans-serif; color: #000; box-shadow: 3px 3px 3px rgba(0, 0, 0, .45); }
  .value { height: 20px; background: #fff; border: 1px solid #111; border-bottom: 0; display: flex; align-items: center; justify-content: space-between; padding: 2px 0 0 4px; }
  .value b { width: 18px; height: 20px; margin: -3px -1px 0 0; background: #cce4f7; border: 1px solid #005499; display: grid; place-items: center; }
  .list { height: 451px; background: #fff; border: solid #7b8088; border-width: 0 2px 1px 1px; display: flex; overflow: hidden; }
  .list ul { width: 381px; flex: none; }
  .list li { height: 15px; padding-left: 2px; gap: 4px; }
  .list li .label { margin-top: 2px; }
  .list li i { width: 27px; height: 14px; border: 1px solid #000; margin-top: 1px; flex: none; }
  .list li i.none { border: 0; }
  .sel { background: #0078d7; color: #fff; }
  .scroll { width: 16px; margin-left: 1px; background: #f0f0f0; display: flex; flex-direction: column; align-items: center; padding: 6px 0 5px; }
  .scroll i { width: 16px; height: 378px; margin: 5px 0 auto; background: #cdcdcd; }
  .marksup { position: absolute; left: 0; top: 0; pointer-events: none; }
  .edge { position: absolute; left: 1428px; top: 0; width: 2px; height: 840px; border-left: 1px solid #8d8d8d; background: linear-gradient(#eee 17px, #111 17px 27px, #eee 27px 60px, #8ba9bd 60px 75px, #ddd 75px 104px, #c33 104px 107px, #8ab8d3 107px 116px, #c33 116px 118px, #ddd 118px 400px, #222 400px 638px, #e5e5e5 638px); }
</style>
